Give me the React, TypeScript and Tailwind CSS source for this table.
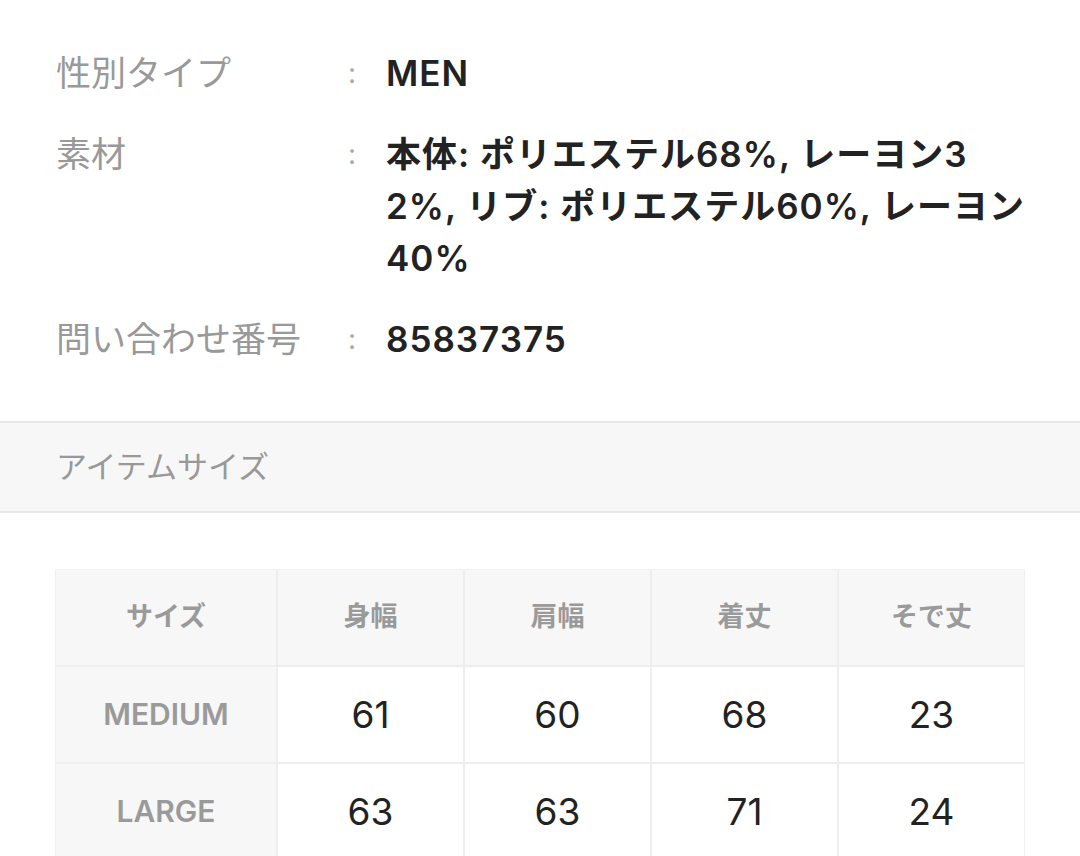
const font = { fontFamily: '"Inter", "Noto Sans CJK JP", sans-serif' };

const specs = [
  { label: "性別タイプ", lines: ["MEN"] },
  {
    label: "素材",
    lines: [
      "本体: ポリエステル68%, レーヨン3",
      "2%, リブ: ポリエステル60%, レーヨン",
      "40%",
    ],
  },
  { label: "問い合わせ番号", lines: ["85837375"] },
];

const headers = ["サイズ", "身幅", "肩幅", "着丈", "そで丈"];

const rows = [
  { size: "MEDIUM", values: ["61", "60", "68", "23"] },
  { size: "LARGE", values: ["63", "63", "71", "24"] },
];

export default function App() {
  return (
    <div className="w-[1080px] h-[856px] overflow-hidden bg-white" style={font}>
      {/* spec rows */}
      <div className="pt-[47px] pb-[56px] flex flex-col gap-[29px]">
        {specs.map((s) => (
          <div key={s.label} className="flex text-[35px] leading-[52px]">
            <div className="w-[348px] pl-[56px] text-[#999999] whitespace-nowrap shrink-0">{s.label}</div>
            <div className="w-[38px] text-[#aaaaaa] text-[28px] shrink-0">:</div>
            <div className="font-semibold text-[#222222] tracking-[1px] whitespace-nowrap">
              {s.lines.map((l) => (
                <div key={l}>{l}</div>
              ))}
            </div>
          </div>
        ))}
      </div>

      {/* section header */}
      <div className="border-y-2 border-[#e8e8e8] bg-[#f7f7f7] h-[92px] flex items-center pl-[56px]">
        <span className="text-[31px] text-[#999999]">アイテムサイズ</span>
      </div>

      {/* size table */}
      <div className="pt-[56px] pl-[55px]">
        <div className="w-[970px] grid grid-cols-[220px_repeat(4,1fr)] gap-[2px] bg-[#eeeeee] border border-[#f0f0f0]">
          {headers.map((h) => (
            <div
              key={h}
              className="h-[95px] bg-[#f7f7f7] flex items-center justify-center text-[27px] font-bold text-[#9a9a9a]"
            >
              {h}
            </div>
          ))}
          {rows.map((r) => (
            <>
              <div
                key={r.size}
                className="h-[95px] bg-[#f7f7f7] flex items-center justify-center text-[30px] font-semibold text-[#9a9a9a]"
              >
                {r.size}
              </div>
              {r.values.map((v, i) => (
                <div
                  key={r.size + i}
                  className="h-[95px] bg-white flex items-center justify-center text-[37px] text-[#222222]"
                >
                  {v}
                </div>
              ))}
            </>
          ))}
        </div>
      </div>
    </div>
  );
}
